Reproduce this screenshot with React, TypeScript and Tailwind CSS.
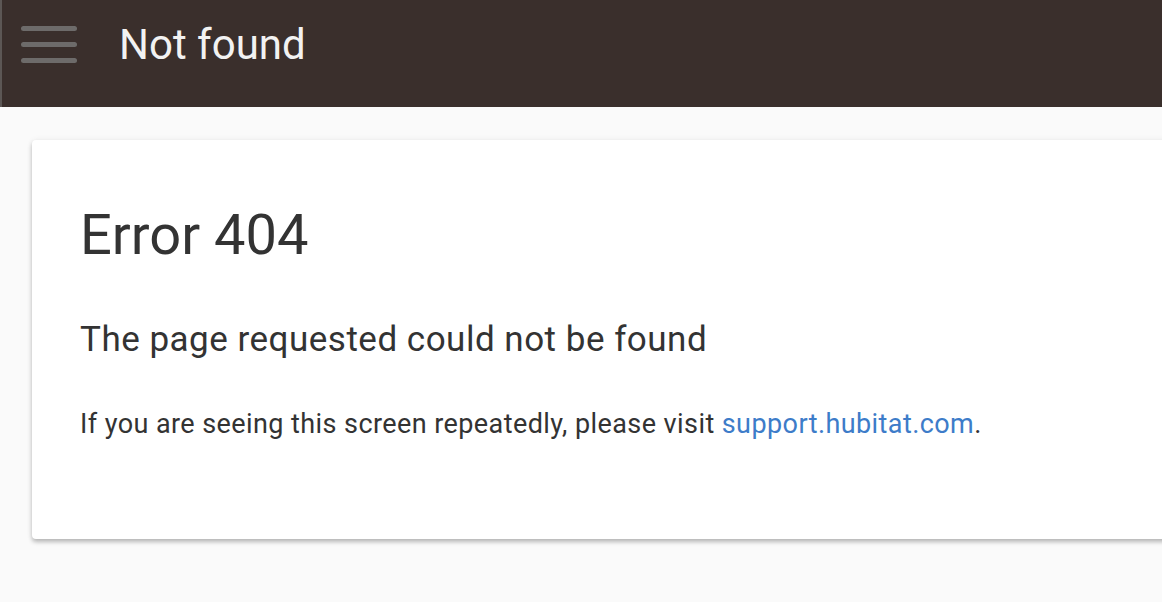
export default function App() {
  return (
    <div className="min-h-[602px] bg-[#fafafa] overflow-hidden" style={{ fontFamily: 'Roboto, "Liberation Sans", sans-serif' }}>
      {/* App bar */}
      <header className="h-[107px] bg-[#3a2f2c] border-l-2 border-[#5c5755]">
        <div className="h-[89px] flex items-center">
          <button className="ml-[19px] w-[56px] flex flex-col gap-[11px]">
            <span className="block h-[5px] rounded-full bg-[#6d6b6a]" />
            <span className="block h-[5px] rounded-full bg-[#6d6b6a]" />
            <span className="block h-[5px] rounded-full bg-[#6d6b6a]" />
          </button>
          <h1 className="ml-[42px] text-[42px] leading-[42px] text-[#f2f2f2]">Not found</h1>
        </div>
      </header>

      {/* Card */}
      <main className="pt-[33px] pl-[32px]">
        <div className="w-[1200px] bg-white rounded-[4px] shadow-[0_3px_4px_rgba(0,0,0,0.25),0_0_6px_rgba(0,0,0,0.06)] pl-[48px] pt-[67px] pb-[101px] text-[#333333]">
          <h2 className="text-[56px] leading-[56px]">Error 404</h2>
          <p className="mt-[59px] text-[35px] leading-[35px] tracking-[0.5px]">The page requested could not be found</p>
          <p className="mt-[54px] text-[27px] leading-[27px] tracking-[0.42px]">
            If you are seeing this screen repeatedly, please visit{' '}
            <a href="#" className="text-[#3d7cc9]">support.hubitat.com</a>.
          </p>
        </div>
      </main>
    </div>
  );
}
